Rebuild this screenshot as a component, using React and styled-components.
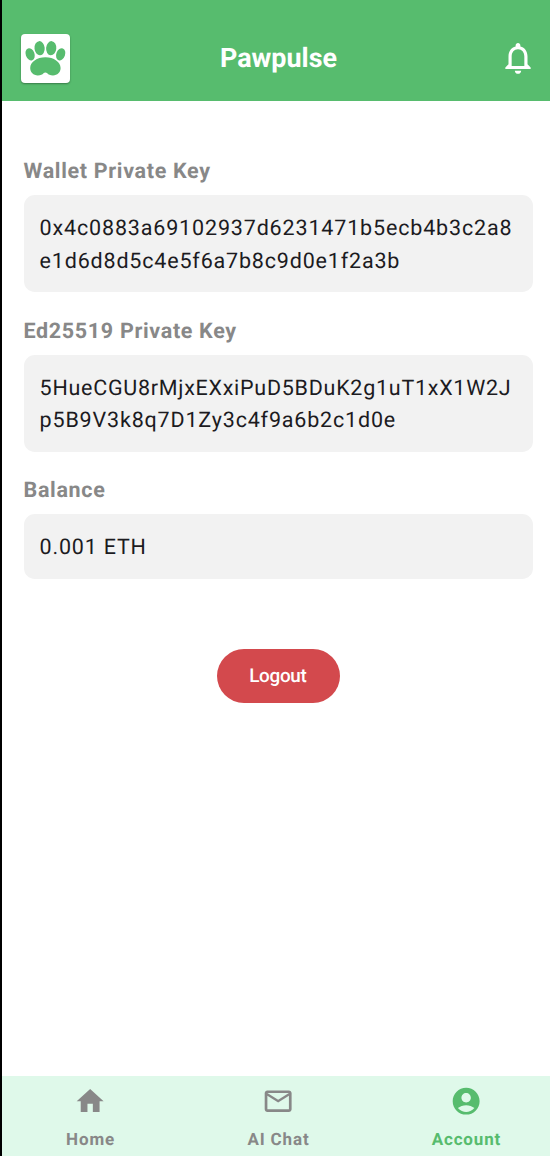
import React from "react";
import styled, { createGlobalStyle } from "styled-components";

const GlobalStyle = createGlobalStyle`
  *, *::before, *::after { box-sizing: border-box; }
  html, body { margin: 0; padding: 0; background: #fff; overflow: hidden; }
  body {
    font-family: Roboto, "Liberation Sans", sans-serif;
    text-rendering: geometricPrecision;
  }
`;

const Screen = styled.div`
  width: 555px;
  height: 1156px;
  display: flex;
  flex-direction: column;
  border-left: 2px solid #000;
  background: #fff;
`;

const Header = styled.header`
  height: 101px;
  flex: none;
  display: grid;
  grid-template-columns: 68px 1fr 68px;
  align-items: center;
  padding-top: 15px;
  background: #57bc6e;
  color: #fff;
`;

const LogoTile = styled.div`
  width: 49px;
  height: 49px;
  margin-left: 19px;
  border-radius: 4px;
  background: #fff;
  box-shadow: 0 1px 2px rgba(0, 0, 0, 0.35);
  svg { display: block; }
`;

const Title = styled.h1`
  margin: 0;
  text-align: center;
  font-size: 26.9px;
  line-height: 32px;
  font-weight: 700;
`;

const BellButton = styled.button`
  width: 38px;
  height: 38px;
  margin-left: 11.5px;
  padding: 0;
  border: 0;
  background: none;
  color: inherit;
  svg { display: block; }
`;

const Content = styled.main`
  flex: 1;
  display: flex;
  flex-direction: column;
  padding: 55.4px 21.7px 0 21.5px;
`;

const Field = styled.section`
  margin-bottom: 23.5px;
`;

const Label = styled.h2`
  margin: 0 0 6.7px;
  font-size: 21.5px;
  line-height: 32.3px;
  font-weight: 700;
  letter-spacing: 0.67px;
  color: #888;
`;

const Value = styled.div`
  padding: 17.9px 16.1px 14.4px;
  border-radius: 10.8px;
  background: #f2f2f2;
  color: #1c1b1f;
  font-size: 21.5px;
  line-height: 32.3px;
  white-space: nowrap;
`;

const Line = styled.div`
  letter-spacing: ${(p) => p.$tracking}px;
`;

const LogoutButton = styled.button`
  align-self: center;
  width: 123px;
  height: 54px;
  margin-top: 46.8px;
  border: 0;
  padding: 0 1px 1px 0;
  border-radius: 27px;
  background: #d3494d;
  color: #fff;
  font: 500 18.9px/27px Roboto, sans-serif;
  letter-spacing: -0.3px;
  text-rendering: inherit;
`;

const Nav = styled.nav`
  flex: none;
  height: 80px;
  display: grid;
  grid-template-columns: repeat(3, 1fr);
  gap: 10.8px;
  background: #dff9ea;
`;

const NavItem = styled.a`
  display: flex;
  flex-direction: column;
  align-items: center;
  padding-top: 9.4px;
  color: ${(p) => (p.$active ? "#57bc6e" : "#888")};
  font-size: 17px;
  line-height: 21.5px;
  font-weight: 700;
  letter-spacing: 0.85px;
  svg { display: block; margin-bottom: 12.6px; }
`;

const Icon = ({ size, d }) => (
  <svg width={size} height={size} viewBox="0 0 24 24" fill="currentColor">
    <path d={d} />
  </svg>
);

const BELL =
  "M12 22c1.1 0 2-.9 2-2h-4c0 1.1.9 2 2 2zm6-6v-5c0-3.07-1.63-5.64-4.5-6.32V4c0-.83-.67-1.5-1.5-1.5s-1.5.67-1.5 1.5v.68C7.64 5.36 6 7.92 6 11v5l-2 2v1h16v-1l-2-2zm-2 1H8v-6c0-2.48 1.51-4.5 4-4.5s4 2.02 4 4.5v6z";
const HOME = "M10 20v-6h4v6h5v-8h3L12 3 2 12h3v8z";
const MAIL =
  "M20 4H4c-1.1 0-1.99.9-1.99 2L2 18c0 1.1.9 2 2 2h16c1.1 0 2-.9 2-2V6c0-1.1-.9-2-2-2zm0 14H4V8l8 5 8-5v10zm-8-7L4 6h16l-8 5z";
const ACCOUNT =
  "M12 2C6.48 2 2 6.48 2 12s4.48 10 10 10 10-4.48 10-10S17.52 2 12 2zm0 4c1.93 0 3.5 1.57 3.5 3.5S13.93 13 12 13s-3.5-1.57-3.5-3.5S10.07 6 12 6zm0 14c-2.03 0-4.43-.82-6.14-2.88C7.55 15.8 9.68 15 12 15s4.45.8 6.14 2.12C16.43 19.18 14.03 20 12 20z";

const Paw = () => (
  <svg width="49" height="49" viewBox="0 0 49 49" fill="#57bc6e">
    <ellipse cx="18.6" cy="14.2" rx="5.1" ry="7.1" transform="rotate(-5 18.6 14.2)" />
    <ellipse cx="30.2" cy="14.2" rx="5.1" ry="7.1" transform="rotate(5 30.2 14.2)" />
    <ellipse cx="9.1" cy="20.3" rx="4.4" ry="6.3" transform="rotate(-20 9.1 20.3)" />
    <ellipse cx="39.7" cy="20.3" rx="4.4" ry="6.3" transform="rotate(20 39.7 20.3)" />
    <path d="M24.4 23.2c8.4 0 15.2 4.8 15.2 10.8 0 4.4-3.2 7.4-7.6 7.4-2.9 0-4.6-.8-5.7-2.1-1.1-1.2-2.7-1.2-3.8 0-1.1 1.3-2.8 2.1-5.7 2.1-4.4 0-7.6-3-7.6-7.4 0-6 6.8-10.8 15.2-10.8z" />
  </svg>
);

const FIELDS = [
  {
    label: "Wallet Private Key",
    lines: [
      { text: "0x4c0883a69102937d6231471b5ecb4b3c2a8", tracking: 0.84 },
      { text: "e1d6d8d5c4e5f6a7b8c9d0e1f2a3b", tracking: 0.82 },
    ],
  },
  {
    label: "Ed25519 Private Key",
    lines: [
      { text: "5HueCGU8rMjxEXxiPuD5BDuK2g1uT1xX1W2J", tracking: 0.73 },
      { text: "p5B9V3k8q7D1Zy3c4f9a6b2c1d0e", tracking: 0.82 },
    ],
  },
  { label: "Balance", lines: [{ text: "0.001 ETH", tracking: 0.8 }] },
];

const TABS = [
  { label: "Home", d: HOME },
  { label: "AI Chat", d: MAIL },
  { label: "Account", d: ACCOUNT, active: true },
];

export default function App() {
  return (
    <Screen>
      <GlobalStyle />
      <Header>
        <LogoTile>
          <Paw />
        </LogoTile>
        <Title>Pawpulse</Title>
        <BellButton aria-label="Notifications">
          <Icon size={38} d={BELL} />
        </BellButton>
      </Header>
      <Content>
        {FIELDS.map((f) => (
          <Field key={f.label}>
            <Label>{f.label}</Label>
            <Value>
              {f.lines.map((line) => (
                <Line key={line.text} $tracking={line.tracking}>
                  {line.text}
                </Line>
              ))}
            </Value>
          </Field>
        ))}
        <LogoutButton>Logout</LogoutButton>
      </Content>
      <Nav>
        {TABS.map((t) => (
          <NavItem key={t.label} $active={t.active}>
            <Icon size={32.3} d={t.d} />
            {t.label}
          </NavItem>
        ))}
      </Nav>
    </Screen>
  );
}
